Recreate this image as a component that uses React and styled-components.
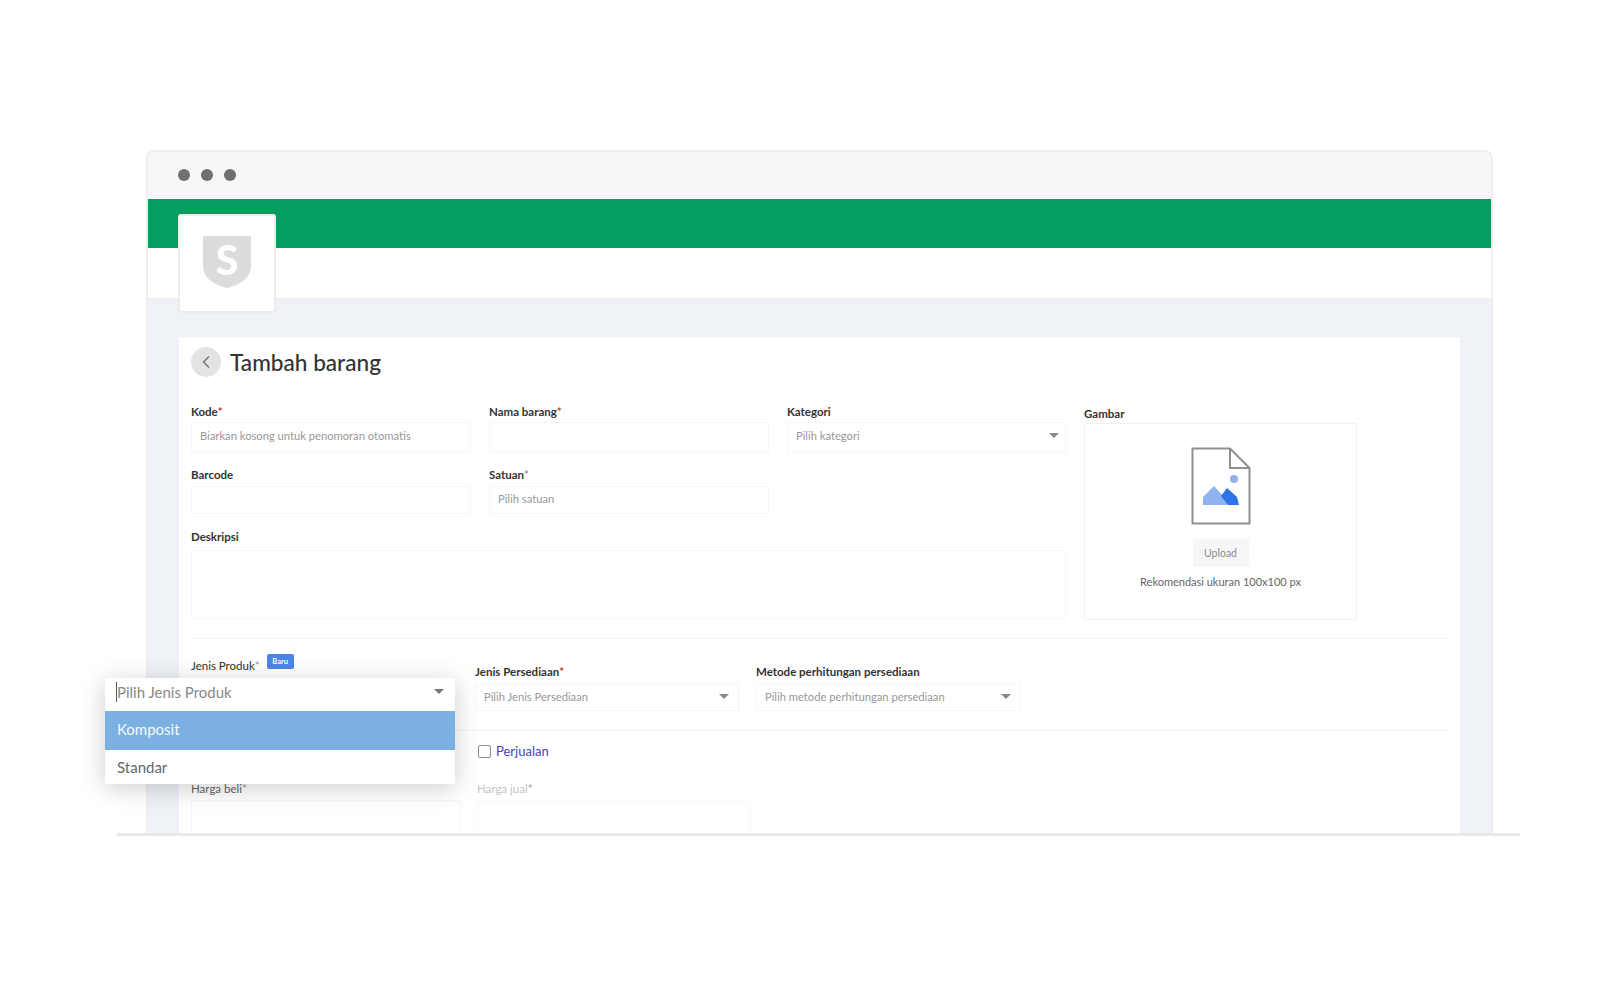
import React from 'react';
import styled, { createGlobalStyle } from 'styled-components';

const GlobalStyle = createGlobalStyle`
  html, body {
    margin: 0;
    padding: 0;
    background: #ffffff;
    font-family: Lato, "Open Sans", sans-serif;
  }
  * { box-sizing: border-box; }
`;

const Stage = styled.div`
  width: 1403px;
  margin: 150px 0 0 117px;
  padding: 0 27px 0 29px;
  border-bottom: 3px solid #e9e9e9;
  position: relative;
`;

const Window = styled.div`
  height: 683px;
  overflow: hidden;
  border: 2px solid #eeeeee;
  border-bottom: 0;
  border-radius: 8px 8px 0 0;
  position: relative;
  display: flex;
  flex-direction: column;
`;

const TitleBar = styled.div`
  height: 47px;
  flex: none;
  background: #f7f7f7;
  display: flex;
  align-items: center;
  gap: 11px;
  padding: 0 0 2px 30px;
`;

const Dot = styled.span`
  width: 12px;
  height: 12px;
  border-radius: 50%;
  background: #707070;
`;

const GreenBar = styled.div`
  height: 49px;
  flex: none;
  background: #049c5f;
`;

const WhiteBar = styled.div`
  height: 53px;
  flex: none;
  background: #ffffff;
  border-bottom: 3px solid #eeeeee;
`;

const LogoBox = styled.div`
  position: absolute;
  left: 30px;
  top: 62px;
  width: 98px;
  height: 99px;
  background: #ffffff;
  border: 2px solid #ececec;
  border-radius: 3px;
  display: flex;
  align-items: center;
  justify-content: center;
  padding-bottom: 4px;
`;

const Content = styled.div`
  flex: 1;
  background: #eff2f7;
  padding: 36px 31px 0 31px;
  display: flex;
`;

const Card = styled.div`
  flex: 1;
  background: #ffffff;
  padding: 10px 11px 0 12px;
`;

const Heading = styled.div`
  display: flex;
  align-items: center;
  gap: 9px;
  height: 30px;
  margin-bottom: 27px;
`;

const BackButton = styled.div`
  width: 30px;
  height: 30px;
  border-radius: 50%;
  background: #e3e3e3;
  display: flex;
  align-items: center;
  justify-content: center;
`;

const Title = styled.h1`
  margin: 2px 0 0;
  font-size: 22.6px;
  line-height: 30px;
  font-weight: 500;
  color: #333333;
`;

const TopArea = styled.div`
  display: grid;
  grid-template-columns: 875px 273px;
  column-gap: 18px;
`;

const FieldGrid = styled.div`
  display: grid;
  grid-template-columns: 280px 280px 279px;
  column-gap: 18px;
  row-gap: 14px;
`;

const Field = styled.div`
  display: flex;
  flex-direction: column;
  min-width: 0;
  grid-column: ${({ $span }) => ($span ? `span ${$span}` : 'auto')};
`;

const Label = styled.label`
  display: flex;
  align-items: center;
  height: 14px;
  margin-bottom: ${({ $gap }) => $gap || 4}px;
  font-size: 11.5px;
  font-weight: 700;
  color: ${({ $faded }) => ($faded ? '#c4c4c4' : '#333333')};
`;

const Required = styled.span`
  color: ${({ $soft }) => ($soft ? '#999999' : '#c0392b')};
`;

const Input = styled.div`
  height: ${({ $h }) => $h || 30}px;
  border: 1px solid ${({ $faint }) => ($faint ? '#fafafa' : '#f6f6f6')};
  background: #ffffff;
  padding: 0 ${({ $right }) => $right || 9}px 3px 8px;
  display: flex;
  align-items: center;
  justify-content: space-between;
  font-size: 11.2px;
  color: #989898;
`;

const Caret = styled.span`
  width: 0;
  height: 0;
  border-left: 5px solid transparent;
  border-right: 5px solid transparent;
  border-top: 5px solid ${({ $dark }) => ($dark ? '#777777' : '#8a8a8a')};
`;

const ImageField = styled.div`
  display: flex;
  flex-direction: column;
  padding-top: 2px;
`;

const ImageLabel = styled(Label)`
  margin-bottom: 3px;
`;

const UploadBox = styled.div`
  height: 197px;
  border: 1px solid #f2f2f2;
  display: flex;
  flex-direction: column;
  align-items: center;
  padding-top: 23px;
`;

const UploadButton = styled.div`
  width: 56px;
  height: 28px;
  margin-top: 14px;
  background: #f6f6f6;
  border-radius: 2px;
  display: flex;
  align-items: center;
  justify-content: center;
  font-size: 10.5px;
  color: #8c8c8c;
`;

const UploadHint = styled.div`
  margin-top: 8px;
  font-size: 11px;
  line-height: 14px;
  color: #666666;
`;

const Divider = styled.div`
  height: 1px;
  background: #f3f3f3;
  margin: ${({ $m }) => $m};
`;

const ProductGrid = styled.div`
  display: grid;
  grid-template-columns: 267px 264px 265px;
  column-gap: 17px;
`;

const ProductLabel = styled(Label)`
  gap: 7px;
  font-weight: 400;
  margin-top: -6px;
`;

const Badge = styled.span`
  width: 27px;
  height: 15px;
  margin-top: -8px;
  border-radius: 2px;
  background: #4a86e8;
  color: #ffffff;
  font-size: 7.5px;
  font-weight: 700;
  display: flex;
  align-items: center;
  justify-content: center;
`;

const PriceGrid = styled.div`
  display: grid;
  grid-template-columns: 270px 274px;
  column-gap: 16px;
`;

const CheckRow = styled.div`
  grid-column: 2;
  display: flex;
  align-items: center;
  gap: 5px;
  height: 14px;
  padding-left: 1px;
  margin-bottom: 23px;
`;

const Checkbox = styled.span`
  width: 13px;
  height: 13px;
  border: 1.5px solid #8d8d8d;
  border-radius: 2px;
`;

const CheckLabel = styled.span`
  font-size: 13px;
  color: #4a3fb5;
`;

const PriceLabel = styled(Label)`
  font-weight: 400;
  margin-bottom: 5px;
  color: ${({ $faded }) => ($faded ? '#c4c4c4' : '#666666')};
`;

const Dropdown = styled.div`
  position: absolute;
  left: -12px;
  top: 528px;
  width: 350px;
  background: #ffffff;
  border-radius: 2px;
  box-shadow: 0 4px 26px rgba(0, 0, 0, 0.2);
`;

const DropdownHead = styled.div`
  height: 33px;
  padding: 0 11px 6px;
  display: flex;
  align-items: center;
  justify-content: space-between;
  font-size: 15px;
  color: #888888;
`;

const Cursor = styled.span`
  border-left: 1px solid #555555;
  line-height: 20px;
`;

const Option = styled.div`
  height: ${({ $active }) => ($active ? 39 : 34)}px;
  padding: 0 12px ${({ $active }) => ($active ? 3 : 0)}px;
  display: flex;
  align-items: center;
  font-size: 15px;
  background: ${({ $active }) => ($active ? '#7cb0e2' : '#ffffff')};
  color: ${({ $active }) => ($active ? '#f2f8fd' : '#666666')};
`;

function ShieldLogo() {
  return (
    <svg width="50" height="54" viewBox="0 0 50 54">
      <path d="M1 1H49V30C49 44 37 50 25 53C13 50 1 44 1 30Z" fill="#dcdcdc" />
      <text x="25" y="40" textAnchor="middle" fontFamily="Lato, sans-serif" fontWeight="900" fontSize="41" fill="#ffffff">S</text>
    </svg>
  );
}

function BackIcon() {
  return (
    <svg width="10" height="14" viewBox="0 0 10 14" fill="none">
      <path d="M8 1.5L2.5 7L8 12.5" stroke="#777777" strokeWidth="1.5" />
    </svg>
  );
}

function FileImageIcon() {
  return (
    <svg width="60" height="78" viewBox="0 0 60 78" fill="none">
      <path d="M1.5 1.5H39L58.5 21V76.5H1.5Z" fill="#ffffff" stroke="#8f8f8f" strokeWidth="2" />
      <path d="M39 1.5V21H58.5" stroke="#8f8f8f" strokeWidth="2" />
      <circle cx="43" cy="32" r="4" fill="#8fb3e8" />
      <path d="M12 58V50L23 39L31 48L37 58Z" fill="#8fb3f0" />
      <path d="M30 49L36 41L46 50L48 58H37Z" fill="#2f72e4" />
    </svg>
  );
}

export default function App() {
  return (
    <>
      <GlobalStyle />
      <Stage>
        <Window>
          <TitleBar>
            <Dot />
            <Dot />
            <Dot />
          </TitleBar>
          <GreenBar />
          <WhiteBar />
          <LogoBox>
            <ShieldLogo />
          </LogoBox>
          <Content>
            <Card>
              <Heading>
                <BackButton>
                  <BackIcon />
                </BackButton>
                <Title>Tambah barang</Title>
              </Heading>
              <TopArea>
                <FieldGrid>
                  <Field>
                    <Label>Kode<Required>*</Required></Label>
                    <Input>Biarkan kosong untuk penomoran otomatis</Input>
                  </Field>
                  <Field>
                    <Label>Nama barang<Required>*</Required></Label>
                    <Input />
                  </Field>
                  <Field>
                    <Label>Kategori</Label>
                    <Input $right={6}>Pilih kategori<Caret /></Input>
                  </Field>
                  <Field>
                    <Label $gap={5}>Barcode</Label>
                    <Input $h={28} />
                  </Field>
                  <Field>
                    <Label $gap={5}>Satuan<Required $soft>*</Required></Label>
                    <Input $h={28}>Pilih satuan</Input>
                  </Field>
                  <div />
                  <Field $span={3}>
                    <Label $gap={6}>Deskripsi</Label>
                    <Input $h={69} />
                  </Field>
                </FieldGrid>
                <ImageField>
                  <ImageLabel>Gambar</ImageLabel>
                  <UploadBox>
                    <FileImageIcon />
                    <UploadButton>Upload</UploadButton>
                    <UploadHint>Rekomendasi ukuran 100x100 px</UploadHint>
                  </UploadBox>
                </ImageField>
              </TopArea>
              <Divider $m="18px 0 25px" />
              <ProductGrid>
                <Field>
                  <ProductLabel>
                    <span>Jenis Produk<Required $soft>*</Required></span>
                    <Badge>Baru</Badge>
                  </ProductLabel>
                </Field>
                <Field>
                  <Label $gap={6}>Jenis Persediaan<Required>*</Required></Label>
                  <Input $h={27}>Pilih Jenis Persediaan<Caret /></Input>
                </Field>
                <Field>
                  <Label $gap={6}>Metode perhitungan persediaan</Label>
                  <Input $h={27}>Pilih metode perhitungan persediaan<Caret /></Input>
                </Field>
              </ProductGrid>
              <Divider $m="19px 0 13px" />
              <PriceGrid>
                <CheckRow>
                  <Checkbox />
                  <CheckLabel>Perjualan</CheckLabel>
                </CheckRow>
                <Field>
                  <PriceLabel>Harga beli<Required $soft>*</Required></PriceLabel>
                  <Input $h={40} />
                </Field>
                <Field>
                  <PriceLabel $faded>Harga jual<Required $soft>*</Required></PriceLabel>
                  <Input $h={40} $faint />
                </Field>
              </PriceGrid>
            </Card>
          </Content>
        </Window>
        <Dropdown>
          <DropdownHead>
            <Cursor>Pilih Jenis Produk</Cursor>
            <Caret $dark />
          </DropdownHead>
          <Option $active>Komposit</Option>
          <Option>Standar</Option>
        </Dropdown>
      </Stage>
    </>
  );
}
